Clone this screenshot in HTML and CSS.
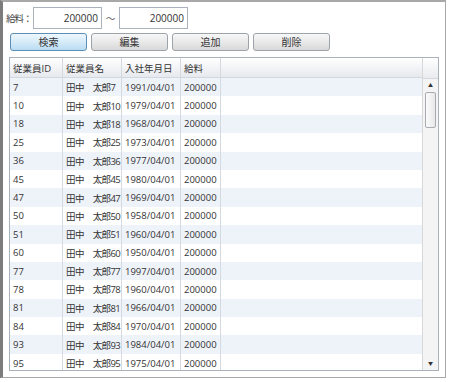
FILE: index.html
```html
<!DOCTYPE html>
<html lang="ja">
<head>
    <meta charset="UTF-8">
    <title>従業員一覧</title>
    <link rel="stylesheet" href="styles.css">
</head>
<body>
    <div class="window">
        <!-- 検索条件 -->
        <div class="filter-row">
            <span class="filter-label">給料：</span>
            <input class="num-input" type="text" value="200000">
            <span class="tilde">～</span>
            <input class="num-input" type="text" value="200000">
        </div>

        <div class="button-row">
            <button class="btn active">検索</button>
            <button class="btn">編集</button>
            <button class="btn">追加</button>
            <button class="btn">削除</button>
        </div>

        <div class="grid">
            <div class="grid-body">
                <div class="row header">
                    <div class="cell">従業員ID</div>
                    <div class="cell">従業員名</div>
                    <div class="cell">入社年月日</div>
                    <div class="cell">給料</div>
                    <div class="cell last"></div>
                </div>
                <div id="rows"></div>
            </div>
            <div class="scrollbar">
                <div class="sb-head"></div>
                <div class="sb-arrow">&#9650;</div>
                <div class="sb-thumb"></div>
                <div class="sb-track"></div>
                <div class="sb-arrow">&#9660;</div>
            </div>
        </div>
    </div>

    <script>
        const employees = [
            [7, 1991], [10, 1979], [18, 1968], [25, 1973], [36, 1977], [45, 1980],
            [47, 1969], [50, 1958], [51, 1960], [60, 1950], [77, 1997], [78, 1960],
            [81, 1966], [84, 1970], [93, 1984], [95, 1975]
        ];

        const rows = document.getElementById('rows');
        employees.forEach((emp, i) => {
            const row = document.createElement('div');
            row.className = i % 2 === 0 ? 'row alt' : 'row';
            row.innerHTML = `
                <div class="cell">${emp[0]}</div>
                <div class="cell name">田中　太郎${emp[0]}</div>
                <div class="cell">${emp[1]}/04/01</div>
                <div class="cell">200000</div>
                <div class="cell last"></div>
            `;
            rows.appendChild(row);
        });
    </script>
</body>
</html>
```

FILE: styles.css
```css
body {
    margin: 0;
    background-color: #ffffff;
    font-family: "Open Sans", "Noto Sans CJK JP", sans-serif;
    font-size: 9.5px;
    color: #333;
}

.window {
    width: 442px;
    height: 375px;
    border: 1px solid #a8a8a8;
    border-top: 2px solid #a8a8a8;
    border-left: 3px solid #7c7c7c;
    background: #fff;
    display: flex;
    flex-direction: column;
}

.filter-row {
    display: flex;
    align-items: center;
    height: 22px;
    margin-top: 5px;
    padding-left: 3px;
}

.filter-label {
    width: 27px;
    white-space: nowrap;
    letter-spacing: -1px;
    color: #444;
}

.num-input {
    width: 61px;
    height: 18px;
    padding: 1px 3px;
    border: 1px solid #a9b2bd;
    font-family: inherit;
    font-size: 10px;
    color: #333;
    text-align: right;
    box-sizing: content-box;
}

.tilde {
    width: 17px;
    text-align: center;
    color: #555;
}

.button-row {
    display: flex;
    gap: 4px;
    margin-top: 4px;
    padding-left: 7px;
}

.btn {
    width: 77px;
    height: 18px;
    padding: 0;
    border: 1px solid #9ea3aa;
    border-radius: 3px;
    background: linear-gradient(#f7f7f7, #e9e9e9 50%, #d8d8d8);
    font-family: inherit;
    font-size: 10px;
    color: #333;
    line-height: 16px;
}

.btn.active {
    border-color: #5c8fb5;
    background: linear-gradient(#eef7fd, #d6ebf8 50%, #b9dcf3);
}

.grid {
    display: flex;
    margin: 6px 0 0 6px;
    width: 428px;
    height: 312px;
    border: 1px solid #a9b1ba;
    overflow: hidden;
}

.grid-body {
    flex: 1;
    overflow: hidden;
}

.row {
    display: flex;
    height: 18.4px;
    align-items: center;
}

.row.alt {
    background-color: #eef2f9;
}

.row.header {
    height: 19px;
    background: linear-gradient(#ffffff, #f3f4f6 50%, #e6e9ee);
    border-bottom: 1px solid #d3d8df;
}

.cell {
    height: 100%;
    display: flex;
    align-items: center;
    padding-left: 3px;
    box-sizing: border-box;
    border-right: 1px solid #d5dae1;
    white-space: nowrap;
    overflow: hidden;
}

.cell.name {
    letter-spacing: -0.6px;
}

.cell:nth-child(1) { width: 53px; }
.cell:nth-child(2) { width: 59px; }
.cell:nth-child(3) { width: 59px; }
.cell:nth-child(4) { width: 40px; }

.cell.last {
    flex: 1;
    border-right: none;
}

.scrollbar {
    width: 15px;
    display: flex;
    flex-direction: column;
    background: #f4f4f4;
    border-left: 1px solid #d8d8d8;
}

.sb-head {
    height: 20px;
    background: linear-gradient(#ffffff, #e9ebee);
    border-bottom: 1px solid #d3d8df;
}

.sb-arrow {
    height: 13px;
    font-size: 5px;
    color: #333;
    text-align: center;
    line-height: 13px;
}

.sb-thumb {
    height: 34px;
    margin: 0 2px;
    border: 1px solid #a8acb2;
    border-radius: 2px;
    background: linear-gradient(90deg, #fbfbfb, #e8e8e8);
}

.sb-track {
    flex: 1;
}
```
